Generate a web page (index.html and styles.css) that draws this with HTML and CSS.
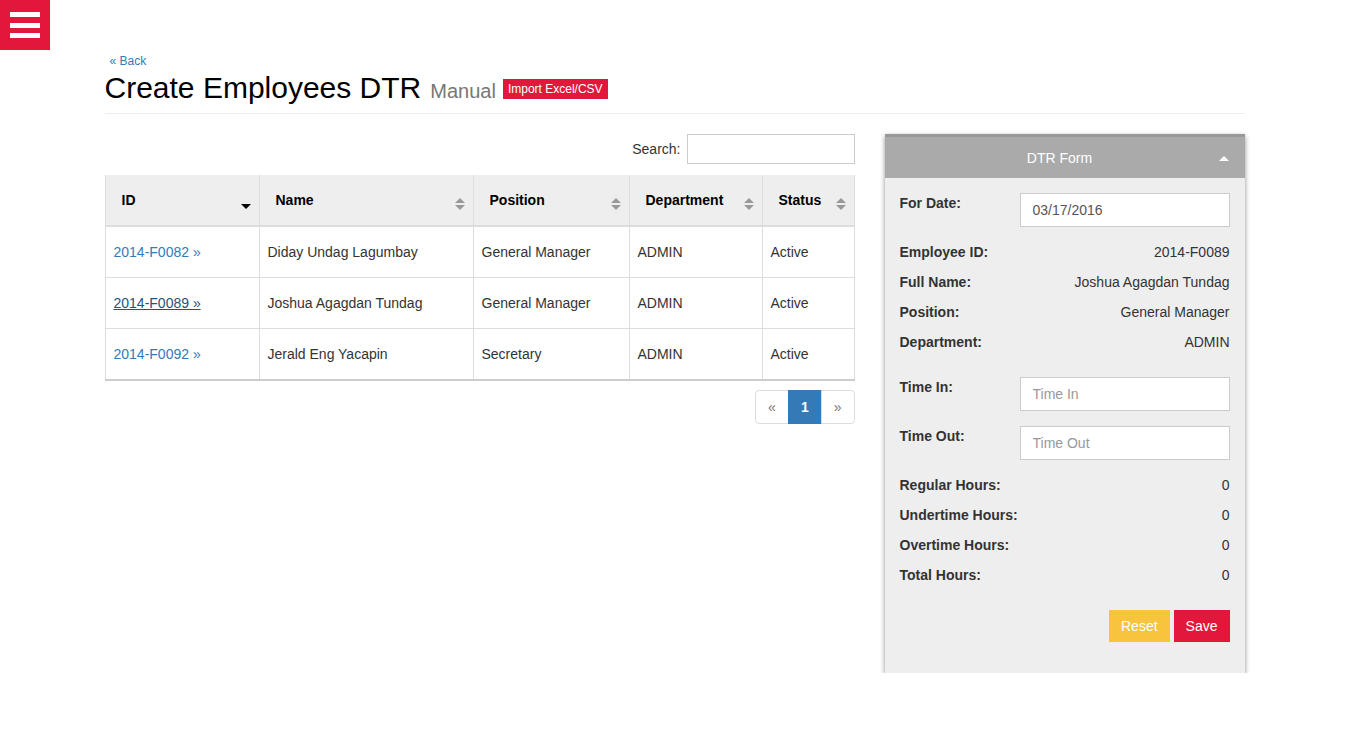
FILE: index.html
```html
<!DOCTYPE html>
<html>
<head>
<meta charset="utf-8">
<title>Create Employees DTR</title>
<link rel="stylesheet" href="styles.css">
</head>
<body>
<button class="menu-toggle" aria-label="Menu">
  <span></span><span></span><span></span>
</button>
<div class="container">
  <a class="back" href="#">&laquo; Back</a>
  <h1 class="title">Create Employees DTR <small>Manual</small> <span class="badge-import">Import Excel/CSV</span></h1>
  <hr class="divider">
  <div class="row">
    <div class="col-main">
      <div class="search-bar">
        <label>Search: <input type="text" class="search-input"></label>
      </div>
      <table class="dtable">
        <colgroup>
          <col class="c1"><col class="c2"><col class="c3"><col class="c4"><col class="c5">
        </colgroup>
        <thead>
          <tr>
            <th><div class="th-in"><span>ID</span><span class="sort-desc"></span></div></th>
            <th><div class="th-in"><span>Name</span><span class="sort-both"></span></div></th>
            <th><div class="th-in"><span>Position</span><span class="sort-both"></span></div></th>
            <th><div class="th-in"><span>Department</span><span class="sort-both"></span></div></th>
            <th><div class="th-in"><span>Status</span><span class="sort-both"></span></div></th>
          </tr>
        </thead>
        <tbody>
          <tr>
            <td><a href="#">2014-F0082 &raquo;</a></td>
            <td>Diday Undag Lagumbay</td>
            <td>General Manager</td>
            <td>ADMIN</td>
            <td>Active</td>
          </tr>
          <tr>
            <td><a href="#" class="focused">2014-F0089 &raquo;</a></td>
            <td>Joshua Agagdan Tundag</td>
            <td>General Manager</td>
            <td>ADMIN</td>
            <td>Active</td>
          </tr>
          <tr>
            <td><a href="#">2014-F0092 &raquo;</a></td>
            <td>Jerald Eng Yacapin</td>
            <td>Secretary</td>
            <td>ADMIN</td>
            <td>Active</td>
          </tr>
        </tbody>
      </table>
      <div class="pager-wrap">
        <ul class="pagination">
          <li><a href="#">&laquo;</a></li>
          <li class="active"><a href="#">1</a></li>
          <li><a href="#">&raquo;</a></li>
        </ul>
      </div>
    </div>
    <div class="col-side">
      <div class="panel">
        <div class="panel-heading">DTR Form<span class="caret-up"></span></div>
        <div class="panel-body">
          <div class="form-row">
            <label>For Date:</label>
            <input type="text" class="fc" value="03/17/2016">
          </div>
          <div class="info">
            <div class="info-row"><b>Employee ID:</b><span>2014-F0089</span></div>
            <div class="info-row"><b>Full Name:</b><span>Joshua Agagdan Tundag</span></div>
            <div class="info-row"><b>Position:</b><span>General Manager</span></div>
            <div class="info-row"><b>Department:</b><span>ADMIN</span></div>
          </div>
          <div class="form-row time-in">
            <label>Time In:</label>
            <input type="text" class="fc" placeholder="Time In">
          </div>
          <div class="form-row time-out">
            <label>Time Out:</label>
            <input type="text" class="fc" placeholder="Time Out">
          </div>
          <div class="info hours">
            <div class="info-row"><b>Regular Hours:</b><span>0</span></div>
            <div class="info-row"><b>Undertime Hours:</b><span>0</span></div>
            <div class="info-row"><b>Overtime Hours:</b><span>0</span></div>
            <div class="info-row"><b>Total Hours:</b><span>0</span></div>
          </div>
          <div class="actions">
            <button class="btn btn-reset">Reset</button>
            <button class="btn btn-save">Save</button>
          </div>
        </div>
      </div>
    </div>
  </div>
</div>
</body>
</html>
```

FILE: styles.css
```css
* { box-sizing: border-box; }
html, body { margin: 0; padding: 0; }
body {
  font-family: "Liberation Sans", Arial, sans-serif;
  font-size: 14px;
  line-height: 20px;
  color: #333;
  background: #fff;
}
a { color: #337ab7; text-decoration: none; }

.menu-toggle {
  position: absolute;
  left: 0;
  top: 0;
  width: 50px;
  height: 50px;
  background: #e2173b;
  border: 0;
  padding: 12px 10px;
  display: flex;
  flex-direction: column;
  justify-content: space-between;
  cursor: pointer;
}
.menu-toggle span {
  display: block;
  width: 30px;
  height: 5px;
  background: #fff;
}

.container {
  width: 1170px;
  margin: 0 auto;
  padding: 53px 15px 0;
}
.back {
  display: block;
  margin-left: 5px;
  font-size: 12px;
  line-height: 16px;
}
.title {
  margin: 2px 0 0;
  font-size: 30px;
  font-weight: normal;
  line-height: 33px;
  color: #000;
  display: flex;
  align-items: baseline;
}
.title small {
  font-size: 20px;
  color: #777;
  margin-left: 9px;
}
.badge-import {
  align-self: center;
  margin-left: 7px;
  margin-top: -1px;
  background: #e2173b;
  color: #fff;
  font-size: 12px;
  line-height: 20px;
  padding: 0 5px;
}
.divider {
  margin: 5px 0 20px;
  border: 0;
  border-top: 1px solid #eee;
}

.row { display: flex; gap: 30px; }
.col-main { width: 750px; }
.col-side { width: 360px; }

.search-bar {
  display: flex;
  justify-content: flex-end;
  margin-bottom: 11px;
}
.search-bar label { display: flex; align-items: center; gap: 6px; }
.search-input {
  width: 168px;
  height: 30px;
  border: 1px solid #ccc;
  font: inherit;
  padding: 4px 8px;
}

.dtable {
  width: 749px;
  border-collapse: collapse;
  table-layout: fixed;
  border-left: 1px solid #ddd;
  border-right: 1px solid #ddd;
}
.dtable col.c1 { width: 154px; }
.dtable col.c2 { width: 214px; }
.dtable col.c3 { width: 156px; }
.dtable col.c4 { width: 133px; }
.dtable col.c5 { width: 92px; }
.dtable th {
  background: #eee;
  text-align: left;
  font-weight: bold;
  color: #000;
  padding: 15px 8px 15px 16px;
  border-left: 1px solid #ddd;
  border-bottom: 2px solid #ddd;
}
.th-in {
  display: flex;
  justify-content: space-between;
  align-items: flex-start;
  height: 20px;
}
.sort-both {
  margin-top: 8px;
  width: 10px;
  height: 12px;
  position: relative;
  flex: none;
}
.sort-both::before, .sort-both::after {
  content: "";
  position: absolute;
  left: 0;
  border-left: 5px solid transparent;
  border-right: 5px solid transparent;
}
.sort-both::before { top: 0; border-bottom: 5px solid #999; }
.sort-both::after { top: 7px; border-top: 5px solid #999; }
.sort-desc {
  margin-top: 14px;
  width: 0;
  height: 0;
  border-left: 5px solid transparent;
  border-right: 5px solid transparent;
  border-top: 5px solid #000;
  flex: none;
}
.dtable td {
  padding: 15px 8px;
  border-left: 1px solid #ddd;
  border-top: 1px solid #ddd;
  background: #fff;
}
.dtable tbody tr:first-child td { border-top: 0; }
.dtable tbody tr:last-child td { border-bottom: 2px solid #ccc; }
.dtable a.focused { color: #23527c; text-decoration: underline; }

.pager-wrap { display: flex; justify-content: flex-end; margin-top: 9px; }
.pagination {
  display: flex;
  list-style: none;
  margin: 0;
  padding: 0;
}
.pagination a {
  display: block;
  padding: 6px 12px;
  line-height: 20px;
  border: 1px solid #ddd;
  margin-left: -1px;
  color: #777;
  font-size: 14px;
  background: #fff;
}
.pagination li:first-child a { border-radius: 4px 0 0 4px; margin-left: 0; }
.pagination li:last-child a { border-radius: 0 4px 4px 0; }
.pagination li.active a {
  background: #337ab7;
  border-color: #337ab7;
  color: #fff;
  font-weight: bold;
}

.panel {
  background: #eee;
  border-top: 3px solid #999;
  box-shadow: 0 2px 5px rgba(0,0,0,0.45);
}
.panel-heading {
  position: relative;
  background: #aaa;
  color: #fff;
  text-align: center;
  padding: 11px 25px 9px 15px;
  line-height: 21px;
}
.caret-up {
  position: absolute;
  right: 16px;
  top: 19px;
  width: 0;
  height: 0;
  border-left: 5px solid transparent;
  border-right: 5px solid transparent;
  border-bottom: 5px solid #fff;
}
.panel-body { padding: 15px 15px 31px; }
.form-row {
  display: grid;
  grid-template-columns: 120px 1fr;
  align-items: start;
}
.form-row label { font-weight: bold; line-height: 20px; }
.fc {
  height: 34px;
  width: 100%;
  border: 1px solid #ccc;
  background: #fff;
  font: inherit;
  color: #555;
  padding: 6px 12px;
}
.fc::placeholder { color: #999; }
.info { margin-top: 15px; }
.info-row {
  display: flex;
  justify-content: space-between;
  line-height: 20px;
  margin-bottom: 10px;
}
.info-row:last-child { margin-bottom: 0; }
.time-in { margin-top: 25px; }
.time-out { margin-top: 15px; }
.hours { margin-top: 15px; }
.actions {
  display: flex;
  justify-content: flex-end;
  gap: 4px;
  margin-top: 25px;
}
.btn {
  border: 0;
  color: #fff;
  font: inherit;
  line-height: 20px;
  padding: 6px 12px;
  cursor: pointer;
}
.btn-reset { background: #f8c33d; }
.btn-save { background: #e2173b; }
```
